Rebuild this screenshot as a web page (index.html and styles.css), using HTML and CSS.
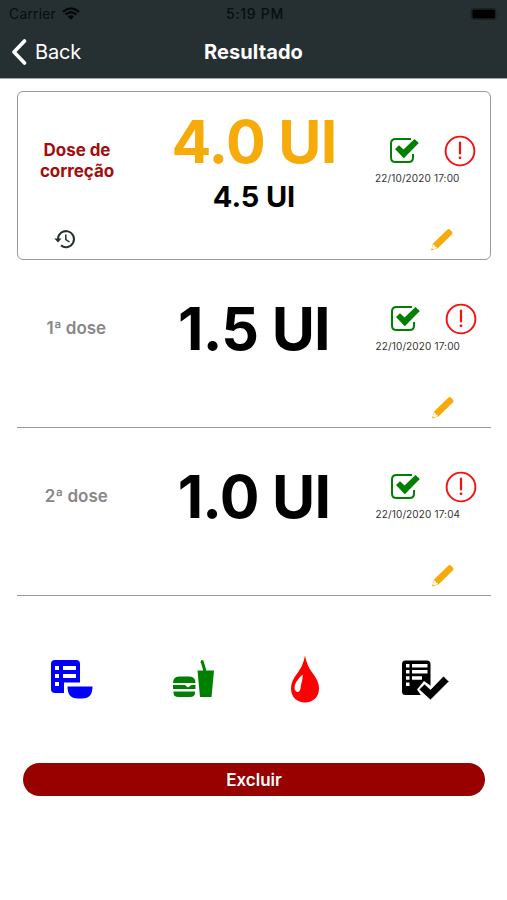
FILE: index.html
```html
<!DOCTYPE html>
<html lang="pt">
<head>
<meta charset="utf-8">
<title>Resultado</title>
<link rel="stylesheet" href="styles.css">
</head>
<body>
<svg class="defs" aria-hidden="true">
  <symbol id="check" viewBox="0 0 30 28">
    <path d="M22 2H6.500Q2 2 2 6.500V20.500Q2 25 6.500 25H19.500Q24 25 24 20.500V17" fill="none" stroke="#008000" stroke-width="2"/>
    <path d="M6 12L10 8.200L14.500 12.500L25.500 2L29.800 6L14.800 21.300Z" fill="#008000"/>
  </symbol>
  <symbol id="alert" viewBox="0 0 32 32">
    <circle cx="16" cy="16" r="14.400" fill="none" stroke="#f5100f" stroke-width="1.900"/>
    <path d="M16 7.500V18.500" stroke="#f5100f" stroke-width="2.200" stroke-linecap="round"/>
    <circle cx="16" cy="22.800" r="1.400" fill="#f5100f"/>
  </symbol>
  <symbol id="pencil" viewBox="0 0 24 24">
    <path d="M1 22.500L3 15.500L17.500 1.500Q18.800.500 20 1.700L22 3.700Q23 5 22 6.200L7.800 20.200Z" fill="#f7ab0a"/>
    <path d="M3 16.800L4.200 16.600L4.700 18.500L6.700 19L6.500 20.300L3.200 21.300L2 20.200Z" fill="#fff"/>
  </symbol>
</svg>

<header class="header">
  <div class="statusbar">
    <div class="carrier"><span>Carrier</span>
      <svg class="wifi" viewBox="0 0 18 13"><path d="M1 4.800Q9-2 17 4.800M3.700 7.500Q9 3 14.300 7.500" fill="none" stroke="#050808" stroke-width="2.300"/><path d="M5.800 9.500Q9 6.800 12.200 9.500L9 12.800Z" fill="#050808"/></svg>
    </div>
    <time class="clock">5:19 PM</time>
    <svg class="battery" viewBox="0 0 31 14"><rect x=".5" y="1" width="26" height="12" rx="3" fill="#1a2323"/><rect x="2.500" y="2.700" width="22.500" height="8.600" rx="1.500" fill="#000"/><path d="M28 5Q30 7 28 9Z" fill="#1a2323"/></svg>
  </div>
  <nav class="navbar">
    <a class="back"><svg class="chevron" viewBox="0 0 16 26"><path d="M13.500 2L3 13L13.500 24" fill="none" stroke="#fff" stroke-width="3.600" stroke-linecap="round" stroke-linejoin="round"/></svg><span>Back</span></a>
    <h1 class="title">Resultado</h1>
    <span></span>
  </nav>
</header>

<main class="content">
  <section class="dose dose-correction">
    <div class="label">Dose de<br>correção</div>
    <div class="values"><div class="amount amount-gold">4.0 UI</div><div class="previous">4.5 UI</div></div>
    <div class="state"><div class="badges"><svg class="check"><use href="#check"/></svg><svg class="alert"><use href="#alert"/></svg></div><time class="date">22/10/2020 17:00</time></div>
    <svg class="history" viewBox="0 0 22 20"><path d="M4 10A8 8 0 1 1 7 16.400" fill="none" stroke="#263032" stroke-width="2"/><path d="M.3 9.500H7.500L4 13.500Z" fill="#263032"/><path d="M11.800 5.500V10.500L15.500 13" fill="none" stroke="#263032" stroke-width="1.500"/></svg>
    <svg class="pencil"><use href="#pencil"/></svg>
  </section>
  <section class="dose">
    <div class="label label-muted">1ª dose</div>
    <div class="values"><div class="amount">1.5 UI</div></div>
    <div class="state"><div class="badges"><svg class="check"><use href="#check"/></svg><svg class="alert"><use href="#alert"/></svg></div><time class="date">22/10/2020 17:00</time></div>
    <svg class="pencil"><use href="#pencil"/></svg>
  </section>
  <section class="dose">
    <div class="label label-muted">2ª dose</div>
    <div class="values"><div class="amount">1.0 UI</div></div>
    <div class="state"><div class="badges"><svg class="check"><use href="#check"/></svg><svg class="alert"><use href="#alert"/></svg></div><time class="date">22/10/2020 17:04</time></div>
    <svg class="pencil"><use href="#pencil"/></svg>
  </section>
</main>

<div class="actions">
  <svg class="action" viewBox="0 0 50 50"><path d="M9 5H30Q34 5 34 9V27.500H18V38H9Q5 38 5 34V9Q5 5 9 5Z" fill="#00f"/><path d="M9 11h4v4H9zM9 19h4v4H9zM9 27h4v4H9zM17 11h13v4H17zM17 19h13v4H17z" fill="#fff"/><path d="M21.500 31.500H46.500Q46.500 43.500 36.500 43.500H31.500Q21.500 43.500 21.500 31.500Z" fill="#00f"/></svg>
  <svg class="action" viewBox="-4 0 50 50"><g fill="#008000"><path d="M5 28Q5 21.500 11 21.500H21.500Q27.500 21.500 27.500 28ZM5.500 36.500H27V38Q27 42 22 42H10.500Q5.500 42 5.500 38Z"/><path d="M5 30H17L20 32.500L23.500 30H27.500V34H5Z"/><path d="M29.500 15.500H46L43.500 42H32Z"/><path d="M37 16L34.200 6.800L32.800 6.500" fill="none" stroke="#008000" stroke-width="3"/></g></svg>
  <svg class="action" viewBox="1.500 0 50 50"><path d="M24.500.500Q26 10 32 18Q38.500 26 38.500 33.500C38.500 42 32.500 47.500 24.500 47.500S10.500 42 10.500 33.500Q10.500 26 17 18Q23 10 24.500.500Z" fill="red"/><path d="M22 19.500Q14 27 14 33Q14.500 37 17.500 37Q20 37 20.500 30Q22.800 22 22 19.500Z" fill="#fff"/></svg>
  <svg class="action" viewBox="0 0 50 50"><rect x="2" y="5.500" width="28.500" height="34.500" rx="3.500"/><path d="M6 9h3.500v3.500H6zM6 15h3.500v3.500H6zM6 21.300h3.500v3.500H6zM6 27.500h3.500V31H6zM12 9h15.500v3.500H12zM12 15h15.500v3.500H12zM12 21.300h10v3.500H12z" fill="#fff"/><path d="M17 34.500L24 26L31 31V41H21.500Z" fill="#fff"/><path d="M19 34.500L24.500 29L30.500 34.500L43.500 21L49 26.500L30.500 45Z" stroke="#fff" stroke-width=".8"/></svg>
</div>
<button class="remove">Excluir</button>
</body>
</html>
```
FILE: styles.css
```css
* { box-sizing: border-box; }
body { margin: 0; background: #fff; color: #000; font-family: Inter, "Liberation Sans", sans-serif; }
svg { display: block; }
.defs { display: none; }

.header { height: 79px; background: #263032; border-bottom: 1px solid #a0a6a6; }
.statusbar { display: grid; grid-template-columns: 1fr auto 1fr; align-items: center; height: 27px; padding: 0 6px 0 9px; color: #090d0e; font-size: 14px; }
.carrier { display: flex; align-items: center; gap: 6px; letter-spacing: .15px; }
.wifi { width: 18px; height: 13px; }
.clock { font-weight: 500; letter-spacing: .7px; }
.battery { justify-self: end; width: 31px; height: 14px; }
.navbar { display: grid; grid-template-columns: 1fr auto 1fr; align-items: center; height: 50px; padding: 0 11px; color: #fff; }
.back { display: flex; align-items: center; gap: 8px; font-size: 20px; letter-spacing: -.2px; }
.chevron { width: 16px; height: 26px; }
.title { margin: 0; font-size: 20px; font-weight: 700; letter-spacing: .1px; }

.content { padding: 13px 16px 0 17px; }
.dose { display: grid; grid-template-columns: 1fr 2fr 1fr; grid-template-rows: 137px 1fr; height: 168px; border-bottom: 1px solid #999; }
.dose-correction { height: 169px; margin: -1px 0 0; border: 1px solid #999; border-radius: 6px; }
.label { align-self: center; text-align: center; color: #a60c0c; font-size: 17px; font-weight: 700; line-height: 21px; letter-spacing: -.05px; }
.label-muted { color: #888; font-weight: 600; }
.values { display: flex; flex-direction: column; align-items: center; justify-content: center; }
.amount { font-size: 59px; font-weight: 700; line-height: 60px; white-space: nowrap; letter-spacing: -.7px; }
.amount-gold { margin-top: 5px; color: #f7ab0a; }
.previous { margin-top: 8px; font-size: 29px; font-weight: 700; line-height: 34px; letter-spacing: -.1px; }
.state { padding: 43px 0 0 3px; }
.badges { display: flex; align-items: center; gap: 25px; padding-left: 14px; }
.check { width: 30px; height: 28px; }
.alert { width: 32px; height: 32px; }
.date { display: block; margin-top: 4px; color: #333; font-size: 10px; line-height: 14px; white-space: nowrap; letter-spacing: .14px; }
.history { grid-column: 1; width: 22px; height: 20px; margin: 0 0 0 36px; }
.pencil { grid-column: 3; grid-row: 2; width: 24px; height: 24px; margin: -1px 0 0 58px; }

.actions { display: flex; padding: 59px 57px 0 46px; justify-content: space-between; }
.action { width: 50px; height: 50px; }
.remove { display: block; width: 462px; height: 33px; margin: 58px 0 0 23px; padding: 0; border: 0; border-radius: 17px; background: #900; color: #fff; font: 600 17px Inter, "Liberation Sans", sans-serif; }
```
